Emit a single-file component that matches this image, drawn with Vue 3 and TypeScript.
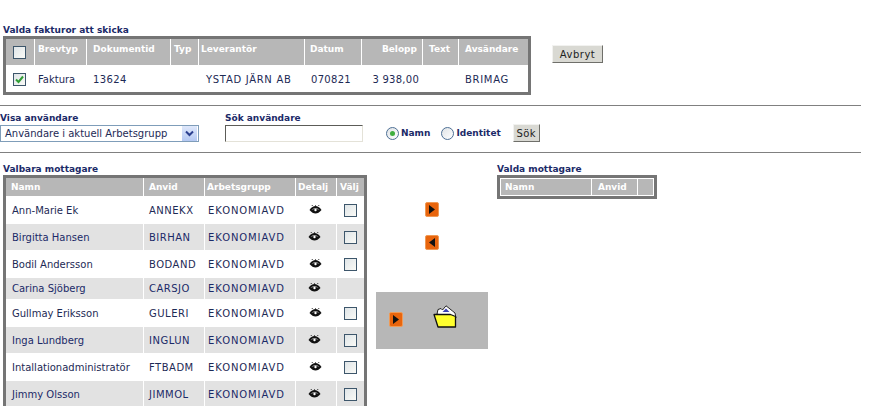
<script setup lang="ts">
interface Recipient {
  name: string
  id: string
  selectable: boolean
}

const recipients: Recipient[] = [
  { name: 'Ann-Marie Ek', id: 'ANNEKX', selectable: true },
  { name: 'Birgitta Hansen', id: 'BIRHAN', selectable: true },
  { name: 'Bodil Andersson', id: 'BODAND', selectable: true },
  { name: 'Carina Sjöberg', id: 'CARSJO', selectable: false },
  { name: 'Gullmay Eriksson', id: 'GULERI', selectable: true },
  { name: 'Inga Lundberg', id: 'INGLUN', selectable: true },
  { name: 'Intallationadministratör', id: 'FTBADM', selectable: true },
  { name: 'Jimmy Olsson', id: 'JIMMOL', selectable: true },
]
</script>

<template>
  <div class="page">
    <!-- valda fakturor -->
    <div class="label first">Valda fakturor att skicka</div>
    <div class="invoice_row">
      <div class="frame invoice_frame">
        <table class="invoices">
          <thead>
            <tr>
              <th><span class="chk"></span></th>
              <th>Brevtyp</th>
              <th>Dokumentid</th>
              <th>Typ</th>
              <th>Leverantör</th>
              <th>Datum</th>
              <th>Belopp</th>
              <th>Text</th>
              <th>Avsändare</th>
            </tr>
          </thead>
          <tbody>
            <tr>
              <td>
                <span class="chk">
                  <svg width="9" height="9" viewBox="0 0 9 9"><path d="M1 4.500 3.500 7 8 1.500" fill="none" stroke="#2f9e35" stroke-width="2"/></svg>
                </span>
              </td>
              <td>Faktura</td>
              <td>13624</td>
              <td></td>
              <td>YSTAD JÄRN AB</td>
              <td>070821</td>
              <td>3 938,00</td>
              <td></td>
              <td>BRIMAG</td>
            </tr>
          </tbody>
        </table>
      </div>
      <button class="btn cancel" type="button">Avbryt</button>
    </div>

    <div class="rule rule_top"></div>

    <!-- sökning -->
    <div class="search_row">
      <div class="field show_field">
        <div class="label">Visa användare</div>
        <div class="select">
          <span>Användare i aktuell Arbetsgrupp</span>
          <span class="select_btn">
            <svg width="9" height="7" viewBox="0 0 9 7"><path d="M1 1.500 4.500 5 8 1.500" fill="none" stroke="#2b3f8f" stroke-width="2"/></svg>
          </span>
        </div>
      </div>
      <div class="field search_field">
        <div class="label">Sök användare</div>
        <div class="textbox"></div>
      </div>
      <div class="radios">
        <span class="radio on"><i></i></span>
        <span class="radio_text">Namn</span>
        <span class="radio second"></span>
        <span class="radio_text">Identitet</span>
        <button class="btn search_btn" type="button">Sök</button>
      </div>
    </div>

    <div class="rule rule_bottom"></div>

    <!-- mottagare -->
    <div class="recipients">
      <div class="available">
        <div class="label">Valbara mottagare</div>
        <div class="frame list_frame">
          <table class="list">
            <thead>
              <tr>
                <th>Namn</th>
                <th>Anvid</th>
                <th>Arbetsgrupp</th>
                <th>Detalj</th>
                <th>Välj</th>
              </tr>
            </thead>
            <tbody>
              <tr v-for="r in recipients" :key="r.id">
                <td>{{ r.name }}</td>
                <td>{{ r.id }}</td>
                <td>EKONOMIAVD</td>
                <td>
                  <svg class="eye" width="13" height="10" viewBox="0 0 13 10">
                    <path d="M.5 5C2.500 2 4.500 1 6.500 1s4 1 6 4c-2 2.500-4 3.500-6 3.500S2.500 7.500.5 5Z" fill="#111"/>
                    <path d="M2.500 4.700C4 3.700 9 3.700 10.500 4.700 9 3 4 3 2.500 4.700Z" fill="#fff"/>
                    <circle cx="6.500" cy="5" r="1.200" fill="#fff"/>
                    <path d="M3.500 1 3 0M6.500.8V0M9.500 1l.5-1" stroke="#111" stroke-width=".8"/>
                  </svg>
                </td>
                <td><span v-if="r.selectable" class="chk"></span></td>
              </tr>
            </tbody>
          </table>
        </div>
      </div>

      <div class="actions">
        <button class="arrow" type="button">
          <svg width="6" height="9" viewBox="0 0 6 9"><path d="M0 0 6 4.500 0 9Z" fill="#111"/></svg>
        </button>
        <button class="arrow arrow_back" type="button">
          <svg width="6" height="9" viewBox="0 0 6 9"><path d="M6 0 0 4.500 6 9Z" fill="#111"/></svg>
        </button>
        <div class="archive">
          <button class="arrow" type="button">
            <svg width="6" height="9" viewBox="0 0 6 9"><path d="M0 0 6 4.500 0 9Z" fill="#111"/></svg>
          </button>
          <svg class="folder" width="25" height="23" viewBox="0 0 25 23">
            <path d="M4 9 5 4.500 8 3.500 9.500 5 13 .8 19.500 6 22 8 23 13 21 14Z" fill="#fff" stroke="#111" stroke-width=".9"/>
            <path d="M9.500 7 13 3.500 16.500 7Z" fill="#3b3fb5"/>
            <path d="M1 9.500H17.500L22.500 11.500 22.500 22H5Z" fill="#ffff2e" stroke="#111" stroke-width="1.300" stroke-linejoin="round"/>
          </svg>
        </div>
      </div>

      <div class="selected">
        <div class="label">Valda mottagare</div>
        <div class="frame selected_frame">
          <table class="chosen">
            <thead>
              <tr>
                <th>Namn</th>
                <th>Anvid</th>
                <th></th>
              </tr>
            </thead>
          </table>
        </div>
      </div>
    </div>
  </div>
</template>

<style scoped>
.page {
  width: 890px;
  height: 406px;
  overflow: hidden;
  background: #fff;
  font-family: "DejaVu Sans", Verdana, sans-serif;
  font-size: 10px;
  color: #1d2a55;
}

.label {
  height: 11px;
  line-height: 11px;
  font-size: 9px;
  font-weight: bold;
  color: #1b2a68;
  white-space: nowrap;
}
.label.first {
  margin: 25px 0 0 3px;
}

.frame {
  border: 3px solid #757575;
  box-sizing: content-box;
}

table {
  border-collapse: separate;
  border-spacing: 0;
  table-layout: fixed;
}
th,
td {
  padding: 0;
  box-sizing: border-box;
  white-space: nowrap;
}
th {
  background: #b7b7b7;
  color: #fff;
  font-size: 9px;
  font-weight: bold;
  text-align: left;
  border-right: 1px solid #fff;
  overflow: hidden;
}
th:last-child {
  border-right: 0;
}

/* fakturor */
.invoice_row {
  display: flex;
  align-items: flex-start;
  margin-left: 3px;
}
.invoice_frame {
  width: 522px;
  height: 53px;
}
.invoices {
  width: 522px;
}
.invoices th {
  height: 26px;
  vertical-align: top;
  padding-top: 5px;
}
.invoices td {
  height: 27px;
  padding-top: 1px;
}
.invoices th:nth-child(1) { width: 29px; vertical-align: middle; padding: 0 0 0 7px; }
.invoices th:nth-child(2) { width: 52px; padding-left: 3px; }
.invoices th:nth-child(3) { width: 84px; padding-left: 6px; }
.invoices th:nth-child(4) { width: 28px; padding-left: 3px; }
.invoices th:nth-child(5) { width: 106px; padding-left: 2px; }
.invoices th:nth-child(6) { width: 57px; padding-left: 5px; }
.invoices th:nth-child(7) { width: 61px; padding-right: 5px; text-align: right; }
.invoices th:nth-child(8) { width: 36px; padding-left: 6px; }
.invoices th:nth-child(9) { width: 69px; padding-left: 6px; }
.invoices td:nth-child(1) { padding-left: 7px; }
.invoices td:nth-child(2) { padding-left: 3px; }
.invoices td:nth-child(3) { padding-left: 6px; letter-spacing: .4px; }
.invoices td:nth-child(5) { padding-left: 7px; letter-spacing: .7px; }
.invoices td:nth-child(6) { padding-left: 6px; letter-spacing: .3px; }
.invoices td:nth-child(7) { padding-right: 4px; text-align: right; letter-spacing: .25px; }
.invoices td:nth-child(9) { padding-left: 6px; letter-spacing: .7px; }

.chk {
  display: inline-flex;
  align-items: center;
  justify-content: center;
  width: 13px;
  height: 13px;
  box-sizing: border-box;
  border: 1px solid #3d566b;
  background: linear-gradient(135deg, #dfe5e8, #fafaf6);
  vertical-align: middle;
}

.btn {
  padding: 0;
  border: 1px solid;
  border-color: #f2f2f0 #6f6f6a #6f6f6a #f2f2f0;
  background: #d9d9d3;
  font-family: inherit;
  font-size: 10px;
  letter-spacing: .5px;
  color: #222;
}
.cancel {
  width: 51px;
  height: 18px;
  margin: 9px 0 0 21px;
}

.rule {
  width: 861px;
  height: 1px;
  background: #808080;
}
.rule_top {
  margin-top: 10px;
}
.rule_bottom {
  margin-top: 10px;
}

/* sökning */
.search_row {
  display: flex;
  align-items: flex-end;
  height: 36px;
}
.field .label {
  margin-bottom: 1px;
}
.show_field {
  width: 225px;
}
.select {
  display: flex;
  align-items: center;
  justify-content: space-between;
  width: 199px;
  height: 17px;
  box-sizing: border-box;
  padding: 0 1px 0 4px;
  border: 1px solid #7f9db9;
  white-space: nowrap;
}
.select_btn {
  display: flex;
  align-items: center;
  justify-content: center;
  width: 15px;
  height: 15px;
  background: linear-gradient(#dfe8fb, #b4c8f2);
}
.search_field {
  width: 161px;
}
.textbox {
  width: 138px;
  height: 17px;
  box-sizing: border-box;
  border: 1px solid;
  border-color: #5c5c58 #e4e2d8 #e4e2d8 #5c5c58;
}
.radios {
  display: flex;
  align-items: center;
  height: 18px;
}
.radio {
  display: flex;
  align-items: center;
  justify-content: center;
  width: 13px;
  height: 13px;
  box-sizing: border-box;
  border: 1px solid #4d6f95;
  border-radius: 50%;
  background: linear-gradient(135deg, #dfe3e6, #fff);
}
.radio i {
  width: 5px;
  height: 5px;
  border-radius: 50%;
  background: #3fae3f;
}
.radio.second {
  margin-left: 11px;
}
.radio_text {
  margin-left: 2px;
  font-size: 9px;
  font-weight: bold;
  color: #1b2a68;
}
.search_btn {
  width: 27px;
  height: 18px;
  margin-left: 12px;
}

/* mottagare */
.recipients {
  display: flex;
  align-items: flex-start;
  margin-top: 11px;
  margin-left: 3px;
}
.list_frame {
  width: 358px;
}
.list {
  width: 358px;
}
.list th {
  height: 18px;
}
.list th:nth-child(1) { width: 138px; padding-left: 5px; }
.list th:nth-child(2) { width: 61px; padding-left: 5px; }
.list th:nth-child(3) { width: 91px; padding-left: 2px; }
.list th:nth-child(4) { width: 41px; padding-left: 2px; }
.list th:nth-child(5) { width: 27px; padding-left: 3px; }
.list td:nth-child(1) { padding-left: 6px; }
.list td:nth-child(2) { padding-left: 5px; letter-spacing: .5px; }
.list td:nth-child(3) { padding-left: 3px; letter-spacing: .9px; }
.list td:nth-child(4) { text-align: center; padding-right: 3px; }
.list td:nth-child(5) { text-align: center; padding-right: 1px; }
.list tbody tr {
  height: 27px;
}
.list tbody tr:nth-child(1),
.list tbody tr:nth-child(3),
.list tbody tr:nth-child(5),
.list tbody tr:nth-child(7) {
  height: 28px;
}
.list tbody tr:nth-child(2),
.list tbody tr:nth-child(6),
.list tbody tr:nth-child(8) {
  height: 26px;
}
.list tbody tr:nth-child(4) {
  height: 21px;
}
.list tbody tr:nth-child(even) td {
  background: #e2e2e2;
  color: #1b2a68;
  border-right: 1px solid #fff;
}
.list tbody tr:nth-child(even) td:last-child {
  border-right: 0;
}
.eye {
  display: inline-block;
  vertical-align: middle;
  margin-top: -2px;
}

.actions {
  display: flex;
  flex-direction: column;
  align-items: flex-start;
  width: 112px;
  margin: 38px 0 0 9px;
}
.arrow {
  display: flex;
  align-items: center;
  justify-content: center;
  width: 14px;
  height: 15px;
  padding: 0;
  margin-left: 49px;
  border: 1px solid #f09a55;
  border-radius: 2px;
  background: #e8650d;
}
.arrow_back {
  margin-top: 18px;
}
.archive {
  display: flex;
  align-items: flex-start;
  width: 112px;
  height: 57px;
  margin-top: 42px;
  padding-top: 13px;
  box-sizing: border-box;
  background: #b7b7b7;
}
.archive .arrow {
  margin: 7px 0 0 13px;
}
.folder {
  margin-left: 30px;
}

.selected {
  margin-left: 9px;
}
.selected_frame {
  width: 154px;
}
.chosen {
  width: 154px;
  border: 1px solid #fff;
}
.chosen th {
  height: 16px;
}
.chosen th:nth-child(1) { width: 91px; padding-left: 4px; }
.chosen th:nth-child(2) { width: 46px; padding-left: 6px; }
.chosen th:nth-child(3) { width: 15px; }
</style>

<style>
html,
body {
  margin: 0;
  overflow: hidden;
}
</style>
